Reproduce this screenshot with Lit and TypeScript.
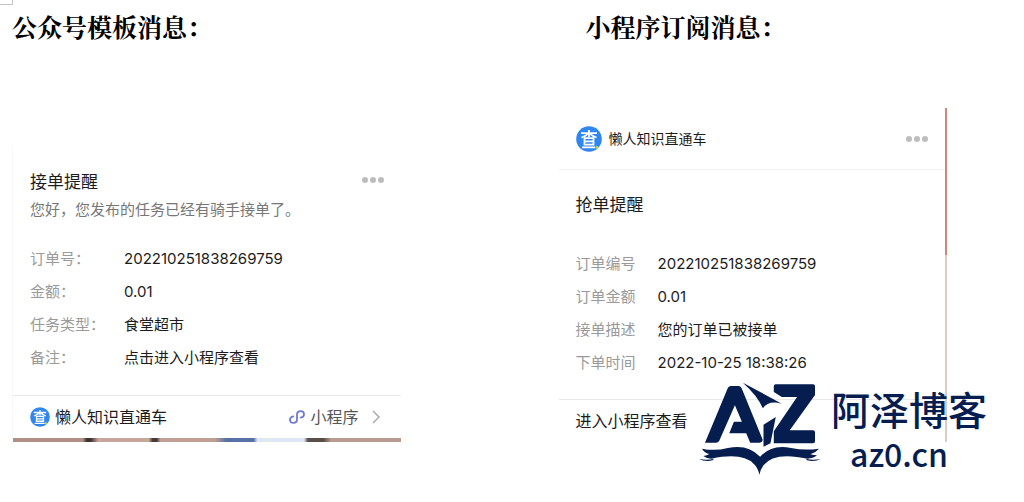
import { LitElement, html, css } from "lit";
import { customElement, property } from "lit/decorators.js";

interface Row {
  label: string;
  value: string;
}

@customElement("brand-badge")
export class BrandBadge extends LitElement {
  static styles = css`
    :host { display: block; flex: none; width: 20px; height: 20px; }
    :host([large]) { width: 26px; height: 26px; }
    svg { display: block; width: 100%; height: 100%; }
  `;
  render() {
    return html`<svg viewBox="0 0 26 26" aria-hidden="true">
      <circle cx="13" cy="13" r="12.8" fill="#2f86ee" />
      <g fill="none" stroke="#fff" stroke-width="1.8">
        <path d="M5 7.2H21M13 4V11M12 7.5Q9.500 10.500 5.500 11.500M14 7.500Q16.500 10.500 20.500 11.500" />
        <path d="M8.500 12.200H17.500V18.600H8.500ZM8.500 15.400H17.500M6 21.300H19" />
      </g>
      <circle cx="20.800" cy="21.300" r="1.500" fill="#b9d94a" />
    </svg>`;
  }
}

@customElement("detail-rows")
export class DetailRows extends LitElement {
  @property({ attribute: false }) rows: Row[] = [];
  static styles = css`
    :host { display: block; }
    .rows {
      display: grid;
      grid-template-columns: max-content 1fr;
      column-gap: var(--row-gap, 22px);
      margin: 0;
      font-size: 15px;
      line-height: 33px;
      white-space: nowrap;
    }
    dt { color: #9a9a9a; }
    dd { margin: 0; color: #1c1c1c; }
  `;
  render() {
    return html`<dl class="rows">
      ${this.rows.map((r) => html`<dt>${r.label}</dt><dd>${r.value}</dd>`)}
    </dl>`;
  }
}

@customElement("app-root")
export class AppRoot extends LitElement {
  private templateRows: Row[] = [
    { label: "订单号：", value: "202210251838269759" },
    { label: "金额：", value: "0.01" },
    { label: "任务类型：", value: "食堂超市" },
    { label: "备注：", value: "点击进入小程序查看" },
  ];
  private subscribeRows: Row[] = [
    { label: "订单编号", value: "202210251838269759" },
    { label: "订单金额", value: "0.01" },
    { label: "接单描述", value: "您的订单已被接单" },
    { label: "下单时间", value: "2022-10-25 18:38:26" },
  ];

  static styles = css`
    :host {
      display: block;
      position: relative;
      background: #fff;
      color: #1c1c1c;
      font-family: Inter, "Noto Sans CJK SC", sans-serif;
    }
    .corner {
      position: absolute;
      left: 0;
      top: 0;
      width: 12px;
      height: 4px;
      border-right: 1px solid #c4c4c4;
      border-bottom: 1px solid #c4c4c4;
    }
    .page {
      display: grid;
      grid-template-columns: 1fr 1fr;
      column-gap: 158px;
      padding: 6px 77px 56px 12px;
    }
    .column { display: flex; flex-direction: column; min-width: 0; }
    h1 {
      margin: 0;
      font-family: "Noto Serif CJK SC", "Noto Sans CJK SC", serif;
      font-size: 25px;
      line-height: 40px;
      font-weight: 700;
      color: #000;
      white-space: nowrap;
    }
    .column.second h1 { padding-left: 27px; }
    .card { display: flex; flex-direction: column; }
    .first .card {
      margin-top: 101px;
      border-left: 1px solid #f8f8f8;
    }
    .second .card {
      margin-top: 62px;
      border-right: 2px solid;
      border-image: linear-gradient(#cf8775 0 44%, #dccbc6 44% 100%) 1;
      border-left-width: 0;
    }
    .body { padding: 20px 17px; }
    .first .body { padding-bottom: 21px; }
    .head { display: flex; justify-content: space-between; align-items: center; }
    h2 { margin: 0; font-size: 17px; line-height: 30px; font-weight: 400; }
    .intro { margin: 0; font-size: 15px; line-height: 26px; color: #777; white-space: nowrap; }
    .more {
      display: flex;
      gap: 2px;
      padding: 0;
      border: 0;
      background: none;
    }
    .head .more { padding-bottom: 4px; }
    .more i { width: 6px; height: 6px; border-radius: 50%; background: #bdbdbd; }
    .first detail-rows { --row-gap: 19px; margin-top: 19px; }
    .second detail-rows { margin-top: 27px; }
    .bar {
      display: flex;
      align-items: center;
      padding: 0 17px;
      font-size: 16px;
      line-height: 42px;
      white-space: nowrap;
    }
    .foot { border-top: 1px solid #e9e9e9; }
    .first .foot { padding-right: 20px; }
    .bar a { color: inherit; text-decoration: none; }
    .name { margin-left: 5px; }
    .bar .link { display: flex; align-items: center; gap: 5px; margin-left: auto; color: #555; }
    .chevron { margin-left: 7px; }
    .bar.top { font-size: 14px; line-height: 61px; border-bottom: 1px solid #f0f0f0; }
    .top .name { margin-left: 7px; margin-right: auto; }
    .strip {
      height: 4px;
      background: linear-gradient(90deg, #b08f84 0 18%, #3b3331 19% 20%, #c7a79b 22% 35%,
        #433a38 36% 37%, #c0a092 38% 52%, #5672a4 55% 62%, #dfe7f3 63% 75%, #5a4e4a 76% 80%, #b99c90 82% 100%);
    }
    .watermark {
      position: absolute;
      right: 37px;
      bottom: 22px;
      display: flex;
      align-items: flex-end;
      gap: 10px;
      color: #061d50;
      font-family: "Noto Sans CJK SC", sans-serif;
      font-weight: 500;
      text-align: center;
      white-space: nowrap;
    }
    .watermark svg { display: block; width: 123px; height: 95px; }
    .site { font-size: 39px; line-height: 44px; }
    .domain { font-size: 32px; line-height: 46px; padding-right: 20px; }
  `;

  private more() {
    return html`<button class="more" aria-label="更多"><i></i><i></i><i></i></button>`;
  }

  render() {
    return html`
      <div class="corner"></div>
      <main class="page">
        <section class="column first">
          <h1>公众号模板消息：</h1>
          <article class="card">
            <div class="body">
              <div class="head"><h2>接单提醒</h2>${this.more()}</div>
              <p class="intro">您好，您发布的任务已经有骑手接单了。</p>
              <detail-rows .rows=${this.templateRows}></detail-rows>
            </div>
            <div class="bar foot">
              <brand-badge></brand-badge>
              <span class="name">懒人知识直通车</span>
              <a class="link" href="#">
                <svg width="16" height="16" viewBox="0 0 16 16" fill="none" stroke="#7079d6" stroke-width="1.8" stroke-linecap="round" aria-hidden="true">
                  <path d="M4.300 7.300C2.300 7.600 1 8.900 1 10.700C1 12.500 2.500 13.900 4.500 13.900C6.500 13.900 8 12.500 8 10.700V5.300C8 3.500 9.500 2.100 11.500 2.100C13.500 2.100 15 3.500 15 5.300C15 7.100 13.700 8.400 11.700 8.700" />
                </svg>
                <span>小程序</span>
                <svg class="chevron" width="10" height="16" viewBox="0 0 10 16" fill="none" stroke="#aaa" stroke-width="1.5" aria-hidden="true"><path d="M2 2L8 8L2 14" /></svg>
              </a>
            </div>
            <div class="strip"></div>
          </article>
        </section>
        <section class="column second">
          <h1>小程序订阅消息：</h1>
          <article class="card">
            <div class="bar top">
              <brand-badge large></brand-badge>
              <span class="name">懒人知识直通车</span>
              ${this.more()}
            </div>
            <div class="body">
              <h2>抢单提醒</h2>
              <detail-rows .rows=${this.subscribeRows}></detail-rows>
            </div>
            <div class="bar foot"><a href="#">进入小程序查看</a></div>
          </article>
        </section>
      </main>
      <div class="watermark">
        <svg viewBox="10 35 370 285" preserveAspectRatio="none" fill="#061d50" aria-hidden="true">
          <path d="M31 220L100 55Q103 50 109 50H132Q138 50 141 56L205 212Q203 220 195 220H167L155 192H104L118 157H142L121 108L74 214Q71 220 64 220Z" />
          <path d="M145 40L262 103Q222 92 205 117Q190 80 145 40Z" />
          <path d="M244 45H356Q362 45 362 51V77L286 183H356Q362 183 362 189V216Q362 222 356 222H238V186L308 83H262L238 68V51Q238 45 244 45Z" />
          <path d="M196 150L246 141L229 225L205 235L206 166Z" fill="#fff" />
          <path d="M207 166L244 143L228 222L207 232Z" />
          <path d="M22 238Q60 246 100 236Q160 223 197 262Q232 223 290 236Q330 244 374 238Q364 250 348 255Q360 258 368 258Q356 268 340 268Q238 246 207 288Q198 300 195 316Q190 295 178 284Q145 248 50 268Q36 268 26 260Q38 258 44 254Q28 250 22 238Z" />
          <path d="M12 268Q35 274 58 268L54 273Q30 278 12 268ZM380 268Q357 274 334 268L338 273Q362 278 380 268Z" />
        </svg>
        <div>
          <div class="site">阿泽博客</div>
          <div class="domain">az0.cn</div>
        </div>
      </div>
    `;
  }
}
